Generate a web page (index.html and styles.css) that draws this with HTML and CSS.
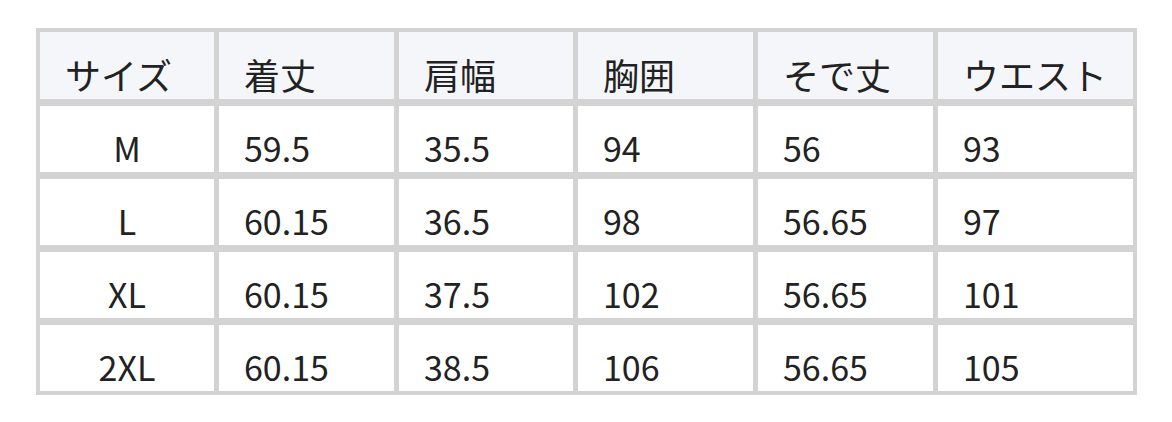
FILE: index.html
```html
<!DOCTYPE html>
<html lang="ja">
<head>
<meta charset="utf-8">
<link rel="stylesheet" href="styles.css">
</head>
<body>
<div class="page">
  <div class="size-table">
    <div class="cell head first">サイズ</div>
    <div class="cell head">着丈</div>
    <div class="cell head">肩幅</div>
    <div class="cell head">胸囲</div>
    <div class="cell head">そで丈</div>
    <div class="cell head">ウエスト</div>

    <div class="cell size">M</div>
    <div class="cell">59.5</div>
    <div class="cell">35.5</div>
    <div class="cell">94</div>
    <div class="cell">56</div>
    <div class="cell">93</div>

    <div class="cell size">L</div>
    <div class="cell">60.15</div>
    <div class="cell">36.5</div>
    <div class="cell">98</div>
    <div class="cell">56.65</div>
    <div class="cell">97</div>

    <div class="cell size">XL</div>
    <div class="cell">60.15</div>
    <div class="cell">37.5</div>
    <div class="cell">102</div>
    <div class="cell">56.65</div>
    <div class="cell">101</div>

    <div class="cell size">2XL</div>
    <div class="cell">60.15</div>
    <div class="cell">38.5</div>
    <div class="cell">106</div>
    <div class="cell">56.65</div>
    <div class="cell">105</div>
  </div>
</div>
</body>
</html>
```
FILE: styles.css
```css
html, body {
  margin: 0;
  padding: 0;
  background: #ffffff;
}
.page {
  padding: 28px 0 0 36px;
}
.size-table {
  display: grid;
  width: 1101px;
  box-sizing: border-box;
  grid-template-columns: 174px 175px 174px 175px 175px 195px;
  grid-template-rows: 67px 66px 66px 66px 66px;
  gap: 7px 5px;
  padding: 4px;
  background: #d3d3d3;
  font-family: "Noto Sans CJK JP", "Noto Sans", sans-serif;
  font-size: 34px;
  line-height: 48px;
  color: #222222;
}
.cell {
  background: #ffffff;
  display: flex;
  align-items: flex-end;
  padding-left: 25px;
}
.head {
  background: #f5f6fa;
  font-size: 36px;
  line-height: 50px;
}
.size {
  justify-content: center;
  padding-left: 0;
}
```
